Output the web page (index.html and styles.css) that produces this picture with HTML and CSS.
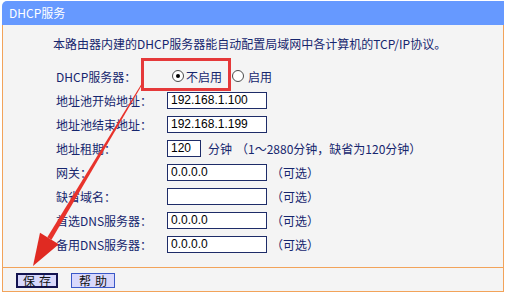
FILE: index.html
```html
<!DOCTYPE html>
<html lang="zh-CN">
<head>
<meta charset="UTF-8">
<title>DHCP服务</title>
<link rel="stylesheet" href="styles.css">
</head>
<body>
<div class="panel">
  <div class="title">DHCP服务</div>
  <div class="content">
    <p class="intro">本路由器内建的DHCP服务器能自动配置局域网中各计算机的TCP/IP协议。</p>
    <div class="row">
      <span class="label">DHCP服务器：</span>
      <span class="radio on"></span><span>不启用</span>
      <span class="radio second"></span><span class="radio-text">启用</span>
    </div>
    <div class="row">
      <span class="label">地址池开始地址：</span>
      <input class="field" type="text" value="192.168.1.100">
    </div>
    <div class="row">
      <span class="label">地址池结束地址：</span>
      <input class="field" type="text" value="192.168.1.199">
    </div>
    <div class="row">
      <span class="label">地址租期：</span>
      <input class="field short" type="text" value="120">
      <span class="unit">分钟</span>
      <span class="note">（1～2880分钟，缺省为120分钟）</span>
    </div>
    <div class="row">
      <span class="label">网关：</span>
      <input class="field" type="text" value="0.0.0.0">
      <span class="hint">（可选）</span>
    </div>
    <div class="row">
      <span class="label">缺省域名：</span>
      <input class="field" type="text" value="">
      <span class="hint">（可选）</span>
    </div>
    <div class="row">
      <span class="label">首选DNS服务器：</span>
      <input class="field" type="text" value="0.0.0.0">
      <span class="hint">（可选）</span>
    </div>
    <div class="row">
      <span class="label">备用DNS服务器：</span>
      <input class="field" type="text" value="0.0.0.0">
      <span class="hint">（可选）</span>
    </div>
  </div>
  <div class="footer">
    <button class="btn focus">保存</button>
    <button class="btn">帮助</button>
  </div>
  <!-- 标注框 -->
  <div class="mark"></div>
</div>
<!-- 红色箭头 -->
<svg class="arrow" width="508" height="297" viewBox="0 0 508 297">
  <polygon points="142.4,84.3 141.6,83.7 47.3,237.2 51.5,239.8" fill="#e8332b"/>
  <polygon points="33,266 40,232.8 58.8,244.2" fill="#e02a22"/>
</svg>
</body>
</html>
```

FILE: styles.css
```css
body {
    margin: 0;
    background: #fff;
    font-family: "Noto Sans CJK SC", sans-serif;
    font-size: 12px;
    color: #16266e;
}
.panel {
    position: relative;
    width: 502px;
    margin: 1px 0 0 2px;
}
.title {
    height: 24px;
    line-height: 24px;
    padding-left: 7px;
    background: #6699ff;
    color: #fff;
    border-radius: 5px 0 0 0;
}
.content {
    background: #f4f4f4;
    border-left: 1px solid #f2a35a;
    border-right: 1px solid #f2a35a;
    padding: 7px 0 11px;
}
.intro {
    margin: 0 0 8px;
    height: 24px;
    line-height: 24px;
    padding-left: 50px;
}
.row {
    display: flex;
    align-items: center;
    height: 24px;
    padding-left: 53px;
}
.label {
    width: 111px;
    flex: none;
}
.radio {
    position: relative;
    width: 12px;
    height: 12px;
    box-sizing: border-box;
    border: 1px solid #4a4a4a;
    border-radius: 50%;
    background: #fff;
    margin: 0 2px 0 5px;
}
.radio.on::after {
    content: "";
    position: absolute;
    left: 3px;
    top: 3px;
    width: 4px;
    height: 4px;
    border-radius: 50%;
    background: #000;
}
.radio.second {
    margin-left: 10px;
}
.radio-text {
    margin-left: 2px;
}
.field {
    width: 100px;
    height: 17px;
    box-sizing: border-box;
    margin: 0;
    padding: 0 3px;
    border: 1px solid #1e2c68;
    background: #fff;
    font-family: "Liberation Sans", sans-serif;
    font-size: 12px;
    color: #000;
    outline: none;
}
.field.short {
    width: 34px;
}
.unit {
    margin-left: 7px;
}
.note {
    margin-left: 4px;
}
.hint {
    margin-left: 4px;
}
.footer {
    display: flex;
    gap: 13px;
    height: 25px;
    padding: 5px 0 0 13px;
    box-sizing: border-box;
    background: #f4f4f4;
    border: 1px solid #f2a35a;
}
.btn {
    display: flex;
    align-items: center;
    justify-content: center;
    height: 15px;
    width: 44px;
    padding: 0 0 0 4px;
    box-sizing: border-box;
    background: #d8d8fc;
    border: 1px solid #3a58c8;
    font-family: "Noto Sans CJK SC", sans-serif;
    font-size: 12px;
    line-height: 12px;
    letter-spacing: 4px;
    white-space: nowrap;
    color: #111;
}
.btn.focus {
    width: 42px;
    border: 2px solid #141450;
}
.mark {
    position: absolute;
    left: 139px;
    top: 57px;
    width: 90px;
    height: 33px;
    box-sizing: border-box;
    border: 3px solid #e5393a;
}
.arrow {
    position: absolute;
    left: 0;
    top: 0;
    pointer-events: none;
}
```
